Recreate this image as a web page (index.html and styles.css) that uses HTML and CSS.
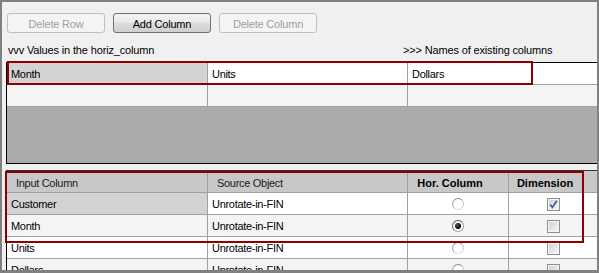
FILE: index.html
```html
<!DOCTYPE html>
<html lang="en">
<head>
    <meta charset="UTF-8">
    <meta name="viewport" content="width=device-width, initial-scale=1.0">
    <title>Unrotate Columns</title>
    <link rel="stylesheet" href="styles.css">
</head>
<body>
    <div class="window">
        <div class="toolbar">
            <button class="btn" disabled>Delete Row</button>
            <button class="btn">Add Column</button>
            <button class="btn" disabled>Delete Column</button>
        </div>

        <div class="captions">
            <span>vvv Values in the horiz_column</span>
            <span>&gt;&gt;&gt; Names of existing columns</span>
        </div>

        <div class="grid values-grid">
            <div class="row">
                <div class="cell selected">Month</div>
                <div class="cell">Units</div>
                <div class="cell">Dollars</div>
            </div>
            <div class="row alt">
                <div class="cell"></div>
                <div class="cell"></div>
                <div class="cell"></div>
            </div>
            <div class="grid-empty"></div>
        </div>

        <div class="grid columns-grid">
            <div class="row head">
                <div class="cell">Input Column</div>
                <div class="cell">Source Object</div>
                <div class="cell centered">Hor. Column</div>
                <div class="cell centered">Dimension</div>
            </div>
            <div class="row">
                <div class="cell selected">Customer</div>
                <div class="cell">Unrotate-in-FIN</div>
                <div class="cell center"><span class="radio"></span></div>
                <div class="cell center">
                    <span class="check">
                        <svg width="11" height="11" viewBox="0 0 11 11"><path d="M2.3 5.6 L4.4 8.4 L8.8 1.8" fill="none" stroke="#3e5ba6" stroke-width="1.7"/></svg>
                    </span>
                </div>
            </div>
            <div class="row alt">
                <div class="cell">Month</div>
                <div class="cell">Unrotate-in-FIN</div>
                <div class="cell center"><span class="radio on"></span></div>
                <div class="cell center"><span class="check"></span></div>
            </div>
            <div class="row">
                <div class="cell">Units</div>
                <div class="cell">Unrotate-in-FIN</div>
                <div class="cell center"><span class="radio"></span></div>
                <div class="cell center"><span class="check"></span></div>
            </div>
            <div class="row alt">
                <div class="cell">Dollars</div>
                <div class="cell">Unrotate-in-FIN</div>
                <div class="cell center"><span class="radio"></span></div>
                <div class="cell center"><span class="check"></span></div>
            </div>
        </div>

        <div class="mark mark-values"></div>
        <div class="mark mark-columns"></div>
    </div>
</body>
</html>
```

FILE: styles.css
```css
body {
    margin: 0;
    font-family: "Liberation Sans", Arial, sans-serif;
    font-size: 11px;
    color: #000;
}

.window {
    position: relative;
    width: 599px;
    height: 273px;
    box-sizing: border-box;
    border: 2px solid #808080;
    border-bottom-width: 3px;
    background-color: #f0f0f0;
    overflow: hidden;
}

.toolbar {
    display: flex;
    gap: 8px;
    padding: 11px 0 0 5px;
}

.btn {
    width: 98px;
    height: 20px;
    box-sizing: border-box;
    padding: 2px 0 0;
    font: inherit;
    letter-spacing: -0.2px;
    color: #000;
    border: 1px solid #707070;
    border-radius: 3px;
    background: linear-gradient(#f2f2f2, #ebebeb 45%, #dddddd 50%, #cfcfcf);
}

.btn:disabled {
    color: #a0a0a0;
    border-color: #bfbfbf;
    background: #f4f4f4;
}

.captions {
    display: grid;
    grid-template-columns: 395px 1fr;
    padding: 11px 0 0 6px;
    line-height: 13px;
    letter-spacing: -0.15px;
}

.grid {
    margin-left: 4px;
    border-left: 1px solid #000;
    border-top: 1px solid #000;
}

.values-grid {
    display: flex;
    flex-direction: column;
    height: 102px;
    box-sizing: border-box;
    margin-top: 5px;
    border-bottom: 1px solid #000;
}

.grid-empty {
    flex: 1;
    background-color: #ababab;
}

.columns-grid {
    margin-top: 6px;
    border-top-color: #333;
}

.row {
    display: grid;
}

.values-grid .row {
    grid-template-columns: 201px 200px 1fr;
}

.columns-grid .row {
    grid-template-columns: 201px 200px 101px 1fr;
}

.cell {
    height: 22px;
    box-sizing: border-box;
    padding: 2px 0 0 4px;
    line-height: 19px;
    white-space: nowrap;
    overflow: hidden;
    letter-spacing: -0.3px;
    background-color: #fff;
    border-right: 1px solid #a0a0a0;
    border-bottom: 1px solid #a0a0a0;
}

.cell:last-child {
    border-right: 0;
}

.alt .cell {
    background-color: #f4f4f4;
}

.cell.selected {
    background-color: #d3d3d3;
}

.head .cell {
    padding: 3px 0 0 9px;
    color: #1a1a1a;
    background-color: #c8c8c8;
}

.head .cell.centered {
    padding: 3px 16px 0 0;
    text-align: center;
    font-weight: bold;
    letter-spacing: 0;
    color: #000;
}

.cell.center {
    display: flex;
    justify-content: center;
    align-items: center;
    padding: 1px 0 0;
}

.radio {
    position: relative;
    width: 12px;
    height: 12px;
    box-sizing: border-box;
    border: 1px solid;
    border-color: #8c8c8c #c9c9c9 #dedede #a8a8a8;
    border-radius: 50%;
    background: radial-gradient(circle at 60% 60%, #fff 50%, #e8e8e8);
}

.radio.on {
    border-color: #555 #9a9a9a #aaa #666;
}

.radio.on::after {
    content: "";
    position: absolute;
    left: 2px;
    top: 2px;
    width: 6px;
    height: 6px;
    border-radius: 50%;
    background: radial-gradient(circle at 35% 35%, #555, #000 70%);
}

.check {
    display: flex;
    width: 13px;
    height: 13px;
    box-sizing: border-box;
    border: 1px solid #8e8f8f;
    background: linear-gradient(135deg, #cfcfcf, #f8f8f8);
    box-shadow: inset 0 0 0 1px #f6f6f6;
}

.mark {
    position: absolute;
    box-sizing: border-box;
    border: 2px solid #8b0000;
    pointer-events: none;
}

.mark-values {
    left: 5px;
    top: 59px;
    width: 526px;
    height: 24px;
}

.mark-columns {
    left: 3px;
    top: 169px;
    width: 579px;
    height: 72px;
}
```
